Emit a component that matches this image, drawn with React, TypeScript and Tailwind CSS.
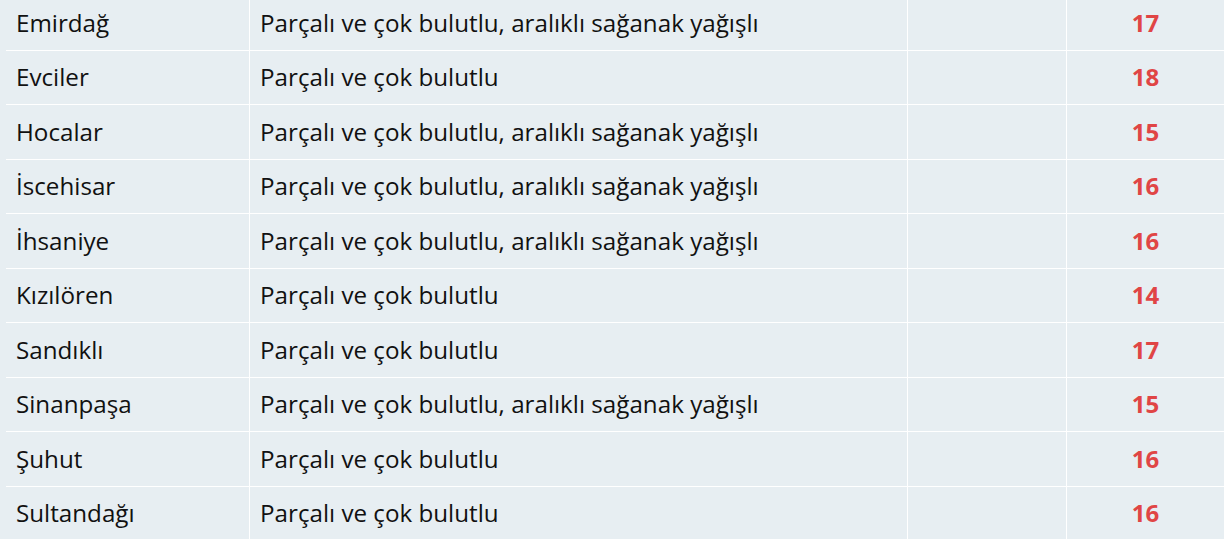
const rows: [string, string, number][] = [
  ["Emirdağ", "Parçalı ve çok bulutlu, aralıklı sağanak yağışlı", 17],
  ["Evciler", "Parçalı ve çok bulutlu", 18],
  ["Hocalar", "Parçalı ve çok bulutlu, aralıklı sağanak yağışlı", 15],
  ["İscehisar", "Parçalı ve çok bulutlu, aralıklı sağanak yağışlı", 16],
  ["İhsaniye", "Parçalı ve çok bulutlu, aralıklı sağanak yağışlı", 16],
  ["Kızılören", "Parçalı ve çok bulutlu", 14],
  ["Sandıklı", "Parçalı ve çok bulutlu", 17],
  ["Sinanpaşa", "Parçalı ve çok bulutlu, aralıklı sağanak yağışlı", 15],
  ["Şuhut", "Parçalı ve çok bulutlu", 16],
  ["Sultandağı", "Parçalı ve çok bulutlu", 16],
];

export default function App() {
  return (
    <div className="h-[539px] w-full overflow-hidden bg-[#e7eef2] font-['Open_Sans',sans-serif] text-[24.2px] text-[#111]">
      <div className="ml-[6px] mt-[-4px]">
        {rows.map(([name, desc, temp]) => (
          <div
            key={name}
            className="grid h-[54.5px] grid-cols-[243px_658px_159px_1fr] border-b border-white"
          >
            <div className="flex items-center pl-[10px]">{name}</div>
            <div className="flex items-center border-l border-white pl-[10px]">{desc}</div>
            <div className="border-l border-white" />
            <div className="flex items-center justify-center border-l border-white text-[24px] font-bold text-[#e04545]">
              {temp}
            </div>
          </div>
        ))}
      </div>
    </div>
  );
}
